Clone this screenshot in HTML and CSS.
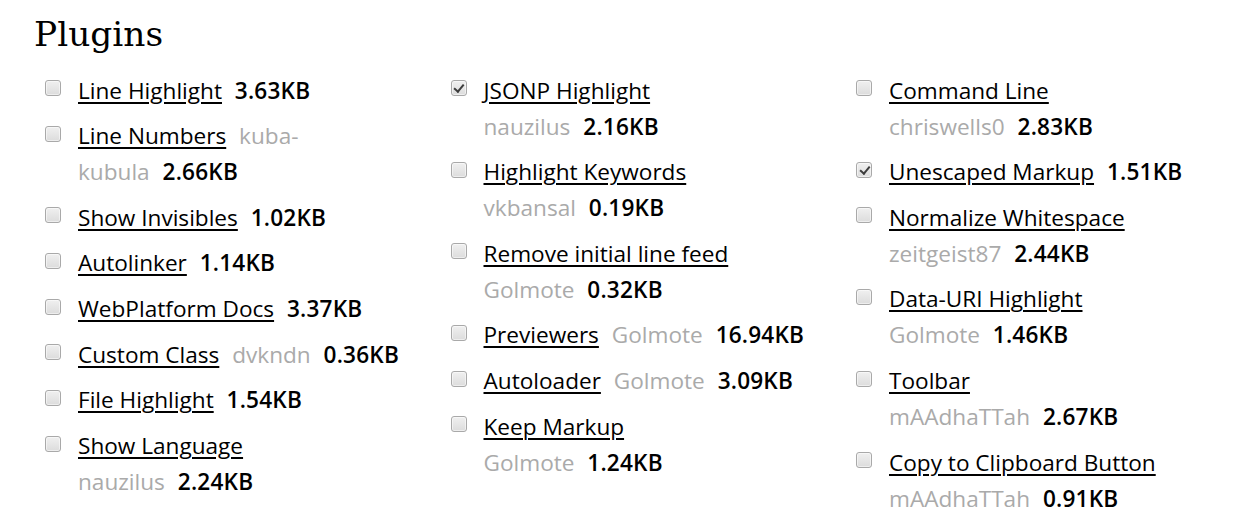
FILE: index.html
```html
<!DOCTYPE html>
<html lang="en">
<head>
<meta charset="utf-8">
<title>Plugins</title>
<link rel="stylesheet" href="styles.css">
</head>
<body>
<section class="plugins">
  <h2 class="title">Plugins</h2>
  <div class="grid">
    <ul class="col">
      <li class="item"><span class="box"></span><span class="text"><a class="name" href="#">Line Highlight</a> <strong class="size">3.63KB</strong></span></li>
      <li class="item"><span class="box"></span><span class="text"><a class="name" href="#">Line Numbers</a> <span class="owner">kuba-</span><br><span class="owner first">kubula</span> <strong class="size">2.66KB</strong></span></li>
      <li class="item"><span class="box"></span><span class="text"><a class="name" href="#">Show Invisibles</a> <strong class="size">1.02KB</strong></span></li>
      <li class="item"><span class="box"></span><span class="text"><a class="name" href="#">Autolinker</a> <strong class="size">1.14KB</strong></span></li>
      <li class="item"><span class="box"></span><span class="text"><a class="name" href="#">WebPlatform Docs</a> <strong class="size">3.37KB</strong></span></li>
      <li class="item"><span class="box"></span><span class="text"><a class="name" href="#">Custom Class</a> <span class="owner">dvkndn</span> <strong class="size">0.36KB</strong></span></li>
      <li class="item"><span class="box"></span><span class="text"><a class="name" href="#">File Highlight</a> <strong class="size">1.54KB</strong></span></li>
      <li class="item"><span class="box"></span><span class="text"><a class="name" href="#">Show Language</a><br><span class="owner first">nauzilus</span> <strong class="size">2.24KB</strong></span></li>
    </ul>
    <ul class="col">
      <li class="item"><span class="box checked"></span><span class="text"><a class="name" href="#">JSONP Highlight</a><br><span class="owner first">nauzilus</span> <strong class="size">2.16KB</strong></span></li>
      <li class="item"><span class="box"></span><span class="text"><a class="name" href="#">Highlight Keywords</a><br><span class="owner first">vkbansal</span> <strong class="size">0.19KB</strong></span></li>
      <li class="item"><span class="box"></span><span class="text"><a class="name" href="#">Remove initial line feed</a><br><span class="owner first">Golmote</span> <strong class="size">0.32KB</strong></span></li>
      <li class="item"><span class="box"></span><span class="text"><a class="name" href="#">Previewers</a> <span class="owner">Golmote</span> <strong class="size">16.94KB</strong></span></li>
      <li class="item"><span class="box"></span><span class="text"><a class="name" href="#">Autoloader</a> <span class="owner">Golmote</span> <strong class="size">3.09KB</strong></span></li>
      <li class="item"><span class="box"></span><span class="text"><a class="name" href="#">Keep Markup</a><br><span class="owner first">Golmote</span> <strong class="size">1.24KB</strong></span></li>
    </ul>
    <ul class="col">
      <li class="item"><span class="box"></span><span class="text"><a class="name" href="#">Command Line</a><br><span class="owner first">chriswells0</span> <strong class="size">2.83KB</strong></span></li>
      <li class="item"><span class="box checked"></span><span class="text"><a class="name" href="#">Unescaped Markup</a> <strong class="size">1.51KB</strong></span></li>
      <li class="item"><span class="box"></span><span class="text"><a class="name" href="#">Normalize Whitespace</a><br><span class="owner first">zeitgeist87</span> <strong class="size">2.44KB</strong></span></li>
      <li class="item"><span class="box"></span><span class="text"><a class="name" href="#">Data-URI Highlight</a><br><span class="owner first">Golmote</span> <strong class="size">1.46KB</strong></span></li>
      <li class="item"><span class="box"></span><span class="text"><a class="name" href="#">Toolbar</a><br><span class="owner first">mAAdhaTTah</span> <strong class="size">2.67KB</strong></span></li>
      <li class="item"><span class="box"></span><span class="text"><a class="name" href="#">Copy to Clipboard Button</a><br><span class="owner first">mAAdhaTTah</span> <strong class="size">0.91KB</strong></span></li>
    </ul>
  </div>
</section>
</body>
</html>
```
FILE: styles.css
```css
html, body {
  margin: 0;
  padding: 0;
  background: #fff;
}

.plugins {
  padding: 14px 0 0 34px;
}

.title {
  margin: 0;
  font-family: "DejaVu Serif", "Liberation Serif", serif;
  font-weight: normal;
  font-size: 34.4px;
  line-height: 41px;
  color: #000;
}

.grid {
  display: grid;
  grid-template-columns: 405.5px 405.5px 405.5px;
  margin: 17.5px 0 0 11px;
}

.col {
  list-style: none;
  margin: 0;
  padding: 0;
}

.item {
  display: flex;
  align-items: flex-start;
  margin: 0 0 9.67px 0;
  font-family: "Open Sans", "Liberation Sans", sans-serif;
  font-size: 22.6px;
  line-height: 36px;
  color: #000;
}

.box {
  flex: 0 0 auto;
  box-sizing: border-box;
  width: 16px;
  height: 16px;
  margin: 7.5px 17px 0 0;
  border: 1px solid #a9a9a9;
  border-radius: 3px;
  background: linear-gradient(#f0f0f0, #dcdcdc);
  box-shadow: inset 0 0 0 1px rgba(255,255,255,0.5);
  position: relative;
}

.box.checked::after {
  content: "";
  position: absolute;
  left: 4.5px;
  top: 1px;
  width: 3.5px;
  height: 8px;
  border: solid #3c3c3c;
  border-width: 0 2.5px 2.5px 0;
  transform: rotate(40deg);
}

.text {
  flex: 1 1 auto;
}

.name {
  color: #000;
  text-decoration: underline;
  text-decoration-thickness: 2px;
  text-underline-offset: 3px;
}

.owner {
  color: #aaaaaa;
  margin-left: 7px;
}

.owner.first {
  margin-left: 0;
}

.size {
  font-weight: 600;
  margin-left: 7px;
  letter-spacing: 0.2px;
}
```
